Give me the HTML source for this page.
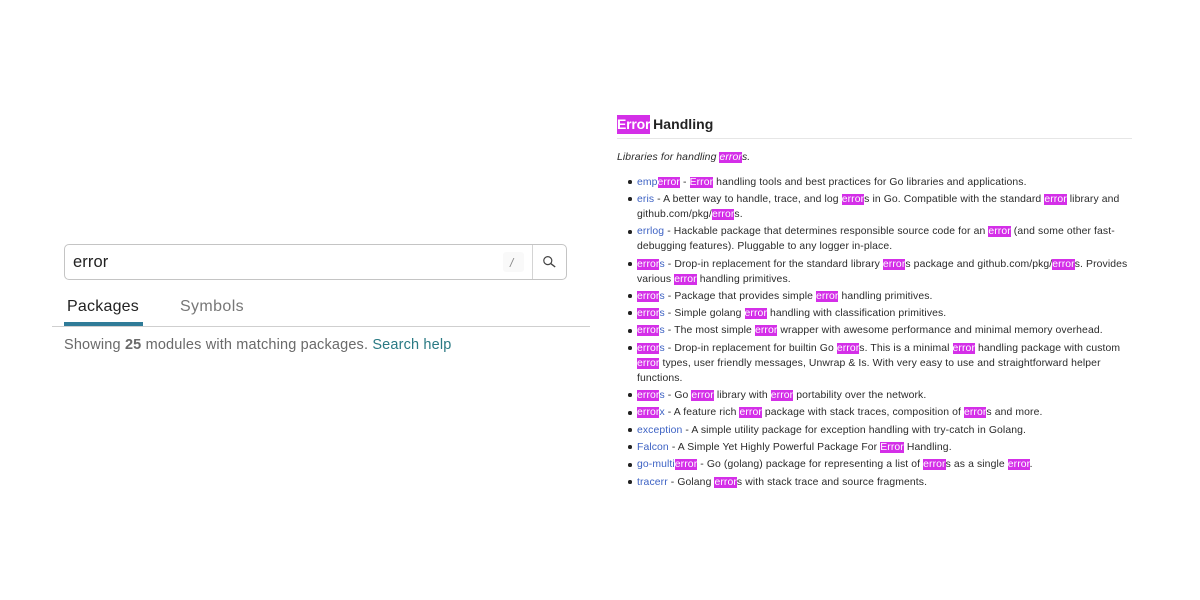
<!DOCTYPE html>
<html><head><meta charset="utf-8">
<style>
html,body{margin:0;padding:0;background:#fff;width:1200px;height:600px;overflow:hidden}
body{position:relative;font-family:"Liberation Sans",sans-serif}
.a{position:absolute;white-space:nowrap}
.l{position:absolute;left:637px;margin-top:1px;white-space:nowrap;font-size:10.4px;line-height:15px;color:#2b2b2b;letter-spacing:.105px}
.d{position:absolute;left:628px;width:3.5px;height:3.5px;border-radius:50%;background:#222}
u{text-decoration:none;background:#d42fe8;color:#fff}
a{color:#3d62c4}
</style></head><body>
<div class="a" style="left:64px;top:244px;width:501px;height:34px;border:1px solid #c4c4c4;border-radius:5px"></div>
<div class="a" style="left:532px;top:245px;width:1px;height:34px;background:#d4d4d4"></div>
<div class="a" style="left:503px;top:252px;width:21px;height:20px;background:#f9f9f9;border-radius:3px"></div>
<div class="a" style="left:73px;top:252px;font-size:16.5px;line-height:20px;color:#222;letter-spacing:.1px">error</div>
<div class="a" style="left:510px;top:256px;font-size:12px;line-height:14px;color:#888;font-style:italic">/</div>
<svg class="a" style="left:541px;top:254px" width="16" height="16" viewBox="0 0 16 16"><circle cx="6.8" cy="6.6" r="4" fill="none" stroke="#444" stroke-width="1.2"/><path d="M9.8 9.6L14.2 13" stroke="#444" stroke-width="1.4" fill="none"/></svg>
<div class="a" style="left:67px;top:297px;font-size:16px;line-height:20px;color:#222;letter-spacing:.22px">Packages</div>
<div class="a" style="left:180px;top:297px;font-size:16px;line-height:20px;color:#777;letter-spacing:.38px">Symbols</div>
<div class="a" style="left:52px;top:326px;width:538px;height:1px;background:#cfcfcf"></div>
<div class="a" style="left:64px;top:322px;width:79px;height:4px;background:#2f7b98"></div>
<div class="a" style="left:64px;top:336px;font-size:14.5px;line-height:18px;color:#6a6a6a;letter-spacing:.16px">Showing <b>25</b> modules with matching packages. <span style="color:#2a7a84">Search help</span></div>

<div class="a" style="left:617px;top:115px;font-size:14px;line-height:18px;font-weight:bold;color:#222;word-spacing:-1px;letter-spacing:.03px"><u style="padding:1px 0 2px;letter-spacing:-.2px">Error</u> Handling</div>
<div class="a" style="left:617px;top:138px;width:515px;height:1px;background:#e6e6e6"></div>
<div class="a" style="left:617px;top:149px;margin-top:0;font-size:10.4px;line-height:15px;font-style:italic;color:#2b2b2b;letter-spacing:.11px;padding-top:1px">Libraries for handling <u>error</u>s.</div>

<div class="d" style="top:180px"></div><div class="l" style="top:174px"><a>emp<u>error</u></a> - <u>Error</u> handling tools and best practices for Go libraries and applications.</div>
<div class="d" style="top:197px"></div><div class="l" style="top:191px"><a>eris</a> - A better way to handle, trace, and log <u>error</u>s in Go. Compatible with the standard <u>error</u> library and</div>
<div class="l" style="top:206px">github.com/pkg/<u>error</u>s.</div>
<div class="d" style="top:230px"></div><div class="l" style="top:223px"><a>errlog</a> - Hackable package that determines responsible source code for an <u>error</u> (and some other fast-</div>
<div class="l" style="top:238px">debugging features). Pluggable to any logger in-place.</div>
<div class="d" style="top:262px"></div><div class="l" style="top:256px"><a><u>error</u>s</a> - Drop-in replacement for the standard library <u>error</u>s package and github.com/pkg/<u>error</u>s. Provides</div>
<div class="l" style="top:271px">various <u>error</u> handling primitives.</div>
<div class="d" style="top:294px"></div><div class="l" style="top:288px"><a><u>error</u>s</a> - Package that provides simple <u>error</u> handling primitives.</div>
<div class="d" style="top:311px"></div><div class="l" style="top:305px"><a><u>error</u>s</a> - Simple golang <u>error</u> handling with classification primitives.</div>
<div class="d" style="top:329px"></div><div class="l" style="top:322px"><a><u>error</u>s</a> - The most simple <u>error</u> wrapper with awesome performance and minimal memory overhead.</div>
<div class="d" style="top:346px"></div><div class="l" style="top:340px"><a><u>error</u>s</a> - Drop-in replacement for builtin Go <u>error</u>s. This is a minimal <u>error</u> handling package with custom</div>
<div class="l" style="top:355px"><u>error</u> types, user friendly messages, Unwrap &amp; Is. With very easy to use and straightforward helper</div>
<div class="l" style="top:370px">functions.</div>
<div class="d" style="top:393px"></div><div class="l" style="top:387px"><a><u>error</u>s</a> - Go <u>error</u> library with <u>error</u> portability over the network.</div>
<div class="d" style="top:411px"></div><div class="l" style="top:404px"><a><u>error</u>x</a> - A feature rich <u>error</u> package with stack traces, composition of <u>error</u>s and more.</div>
<div class="d" style="top:428px"></div><div class="l" style="top:422px"><a>exception</a> - A simple utility package for exception handling with try-catch in Golang.</div>
<div class="d" style="top:445px"></div><div class="l" style="top:439px"><a>Falcon</a> - A Simple Yet Highly Powerful Package For <u>Error</u> Handling.</div>
<div class="d" style="top:463px"></div><div class="l" style="top:456px"><a>go-multi<u>error</u></a> - Go (golang) package for representing a list of <u>error</u>s as a single <u>error</u>.</div>
<div class="d" style="top:480px"></div><div class="l" style="top:474px"><a>tracerr</a> - Golang <u>error</u>s with stack trace and source fragments.</div>
</body></html>
